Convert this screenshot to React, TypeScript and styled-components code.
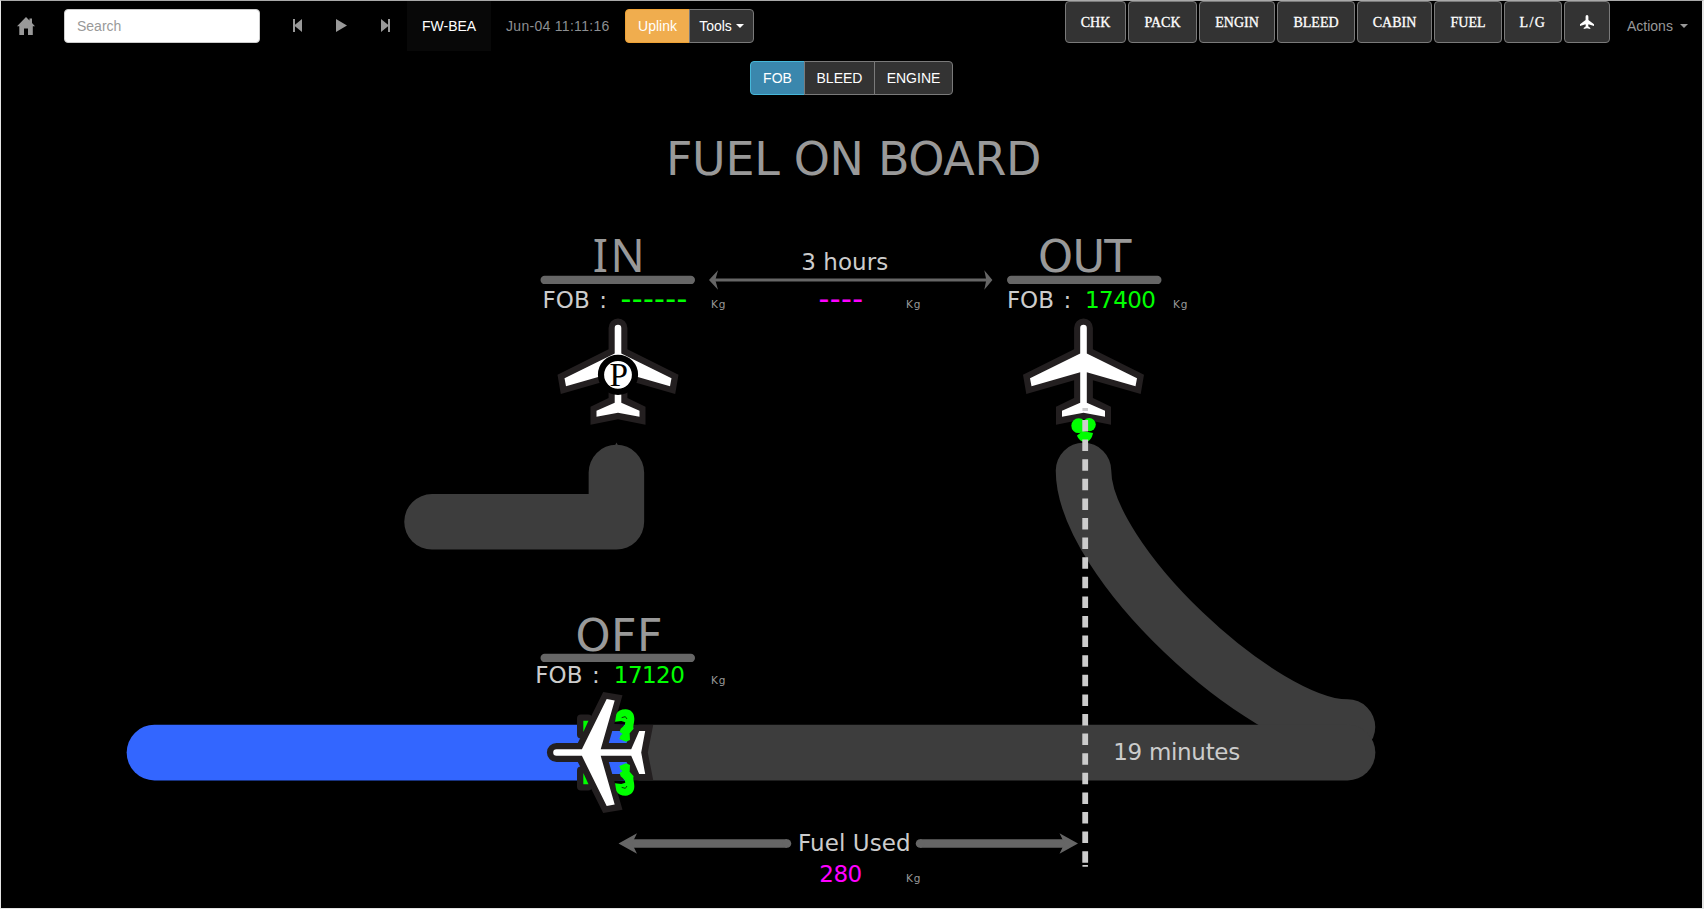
import React from "react";
import styled, { createGlobalStyle, css } from "styled-components";

const GlobalStyle = createGlobalStyle`
  *, *::before, *::after { box-sizing: border-box; }
  html, body { margin: 0; padding: 0; background: #000; overflow: hidden; }
`;

const sans = `"Liberation Sans", Arial, sans-serif`;
const wide = `"DejaVu Sans", Verdana, sans-serif`;

const Page = styled.div`
  width: 1704px;
  height: 909px;
  display: flex;
  flex-direction: column;
  overflow: hidden;
  background: #000;
  border: solid #e4e4e4;
  border-width: 1px 2px 1px 1px;
  border-top-color: #a9a9a9;
  font: 14px/20px ${sans};
`;

const NavBar = styled.header`
  display: flex;
  align-items: flex-start;
  height: 50px;
  flex: none;
`;

const HomeLink = styled.a`
  display: flex;
  width: 63px;
  padding: 16px 0 0 16px;
`;

const SearchInput = styled.input`
  width: 196px;
  height: 34px;
  margin-top: 8px;
  padding: 6px 12px;
  border: 1px solid #ccc;
  border-radius: 4px;
  background: #fff;
  font: 14px/20px ${sans};
  &::placeholder { color: #999; opacity: 1; }
`;

const Playback = styled.div`
  display: flex;
  margin-left: 15px;
  width: 132px;
`;

const PlayButton = styled.button`
  width: 44px;
  height: 50px;
  border: 0;
  background: none;
  display: flex;
  justify-content: center;
  padding: 18px 0 0;
`;

const Aircraft = styled.div`
  width: 84px;
  height: 50px;
  padding: 15px 0 0 15px;
  background: #080808;
  color: #fff;
  white-space: nowrap;
`;

const Timestamp = styled.div`
  width: 134px;
  padding: 15px 0 0 15px;
  color: #8c8f92;
  letter-spacing: 0.3px;
  white-space: nowrap;
`;

const ButtonGroup = styled.div<{ $top?: number }>`
  display: flex;
  margin-top: ${(p) => p.$top ?? 0}px;
`;

const GroupButton = styled.button<{ $width: number; $tone?: "warning" | "info" }>`
  width: ${(p) => p.$width}px;
  height: 34px;
  padding: 0;
  display: flex;
  align-items: center;
  justify-content: center;
  gap: 4px;
  color: #fff;
  background: #333;
  border: 1px solid #7a7a7a;
  font: 14px/20px ${sans};
  & + & { margin-left: -1px; }
  &:first-child { border-radius: 4px 0 0 4px; }
  &:last-child { border-radius: 0 4px 4px 0; }
  ${(p) => p.$tone === "warning" && css`background: #f0ad4e; border-color: #eea236;`}
  ${(p) => p.$tone === "info" && css`background: #3a87ad; border-color: #46b8da;`}
`;

const Caret = styled.span`
  border: 4px solid transparent;
  border-top-color: currentColor;
  border-bottom-width: 0;
`;

const SystemButtons = styled.nav`
  display: flex;
  gap: 2px;
  margin-left: auto;
`;

const SystemButton = styled.button<{ $width: number; $spacing?: number }>`
  width: ${(p) => p.$width}px;
  height: 42px;
  padding: 2px 0 0;
  display: flex;
  align-items: center;
  justify-content: center;
  color: #fff;
  background: #333;
  border: 1px solid #7a7a7a;
  border-radius: 4px;
  font: 14px/14px "Liberation Serif", "Times New Roman", serif;
  letter-spacing: ${(p) => p.$spacing ?? 0}px;
  -webkit-text-stroke: 0.3px #fff;
`;

const PlaneIcon = styled.svg`
  display: block;
  margin-bottom: 3px;
`;

const ActionsLink = styled.a`
  display: flex;
  align-items: center;
  gap: 7px;
  width: 92px;
  padding: 15px 0 0 17px;
  color: #999;
`;

const TabRow = styled.div`
  display: flex;
  justify-content: center;
  height: 49px;
  padding-top: 10px;
  flex: none;
`;

const Diagram = styled.svg`
  display: block;
  width: 1701px;
  height: 807px;
  flex: none;
`;

const Glyph = styled.text`
  font-family: ${wide};
  fill: #ccc;
`;

const grey = "#666";
const taxi = "#3d3d3d";
const shell = "#231f20";
const green = "#0f0";
const magenta = "#f0f";

type LabelProps = { x: number; y: number; length: number; size?: number; fill?: string; family?: string; children: string };

const Label = ({ x, y, length, size = 23, fill = "#ccc", family, children }: LabelProps) => (
  <Glyph x={x} y={y} textLength={length} fontSize={size} style={{ fill, fontFamily: family }}>{children}</Glyph>
);

const Heading = (p: LabelProps) => <Label size={44.5} fill="#999" {...p} />;

const Unit = ({ x, y }: { x: number; y: number }) => (
  <Label x={x} y={y} length={14.4} size={10.5} fill="#999">Kg</Label>
);

const Dashes = ({ x, count, fill }: { x: number; count: number; fill: string }) => (
  <Glyph x={x} y={309} fontSize={30} letterSpacing={0.37} style={{ fill }}>{"-".repeat(count)}</Glyph>
);

const Fob = ({ x, y }: { x: number; y: number }) => (
  <Glyph x={x} y={y} fontSize={23}>FOB <tspan dx="2.2">:</tspan></Glyph>
);

// Nose at the origin, pointing up.
const PlaneShell = () => (
  <path
    fill={shell}
    d="M-9.4 3A9.4 9.6 0 0 1 9.4 3V24.3L60.5 49.7L57.2 69L9.4 55.3V73L27.5 81.7V99.7L0 94.3L-27.5 99.7V81.7L-9.4 73V55.3L-57.2 69L-60.5 49.7L-9.4 24.3Z"
  />
);

const PlaneBody = () => (
  <path
    fill="#fff"
    d="M-3.3 3A3.3 3.3 0 0 1 3.3 3V28.4L53.5 53.2L52 61.2L3.3 47.2V77.7L21.5 85.7V91.7L0 87.7L-21.5 91.7V85.7L-3.3 77.7V47.2L-52 61.2L-53.5 53.2L-3.3 28.4Z"
  />
);

const Engine = () => (
  <g>
    <rect x="577" y="714.5" width="15" height="24" rx="4" fill={shell} />
    <path d="M583.3 720.8H588.5L583.3 732Z" fill={green} />
    <path d="M607 723L624 725L622 731L612 731Z" fill={shell} />
    <g transform="translate(520 600) scale(0.3333)">
      <path
        fill={green}
        d="M285 365L289 343C293 333 303 328 317 328C333 328 343 340 343 356C343 370 338 378 341 386L329 400L330 420L318 425L298 417L302 406L308 402L299 396L302 386L314 376L316 367L304 363Z"
      />
      <path d="M305 353L316 350L321 357" fill="none" stroke="#0a3a0a" strokeWidth="3" />
    </g>
  </g>
);

const systems: [string, number, number?][] = [
  ["CHK", 61], ["PACK", 69], ["ENGIN", 76], ["BLEED", 78], ["CABIN", 75], ["FUEL", 68], ["L/G", 58, 1.4],
];

export default function App() {
  return (
    <Page>
      <GlobalStyle />
      <NavBar>
        <HomeLink>
          <svg width="18" height="18" viewBox="0 0 18 18" fill="#999">
            <path d="M9 0L12.5 3.5V1.5H15V6L18 9.3H15.8V18H11V11.5H7V18H2.3V9.3H0Z" />
          </svg>
        </HomeLink>
        <SearchInput placeholder="Search" />
        <Playback>
          <PlayButton aria-label="Previous">
            <svg width="9" height="13" viewBox="0 0 9 13" fill="#999"><path d="M0 0H2V5.8L9 0V13L2 7.2V13H0Z" /></svg>
          </PlayButton>
          <PlayButton aria-label="Play">
            <svg width="11" height="13" viewBox="0 0 11 13" fill="#999"><path d="M0 0L11 6.5L0 13Z" /></svg>
          </PlayButton>
          <PlayButton aria-label="Next">
            <svg width="9" height="13" viewBox="0 0 9 13" fill="#999"><path d="M9 0H7V5.8L0 0V13L7 7.2V13H9Z" /></svg>
          </PlayButton>
        </Playback>
        <Aircraft>FW-BEA</Aircraft>
        <Timestamp>Jun-04 11:11:16</Timestamp>
        <ButtonGroup $top={8}>
          <GroupButton $width={65} $tone="warning">Uplink</GroupButton>
          <GroupButton $width={65}>Tools<Caret /></GroupButton>
        </ButtonGroup>
        <SystemButtons>
          {systems.map(([name, width, spacing]) => (
            <SystemButton key={name} $width={width} $spacing={spacing}>{name}</SystemButton>
          ))}
          <SystemButton $width={46} aria-label="Flight">
            <PlaneIcon width="14" height="14" viewBox="0 0 14 14" fill="#fff">
              <path d="M7 0C7.900 0 8.400 0.900 8.400 2V5L14 9.200V11L8.400 9.300L8.200 11.300L10.300 13V14L7 13.300L3.700 14V13L5.800 11.300L5.600 9.300L0 11V9.200L5.600 5V2C5.600 0.900 6.100 0 7 0Z" />
            </PlaneIcon>
          </SystemButton>
        </SystemButtons>
        <ActionsLink>Actions<Caret /></ActionsLink>
      </NavBar>
      <TabRow>
        <ButtonGroup>
          <GroupButton $width={55} $tone="info">FOB</GroupButton>
          <GroupButton $width={71}>BLEED</GroupButton>
          <GroupButton $width={79}>ENGINE</GroupButton>
        </ButtonGroup>
      </TabRow>
      <Diagram viewBox="1 100 1701 807">
        <Label x={666} y={175} length={375.5} size={46} fill="#999">FUEL ON BOARD</Label>

        {/* Taxi and runway tracks */}
        <path d="M432 521.8H616.4V472.5" fill="none" stroke={taxi} strokeWidth="55.5" strokeLinecap="round" strokeLinejoin="round" />
        <path d="M615 445.5L616.5 442.5L618 445.5Z" fill={taxi} />
        <path d="M1083.5 470.5C1083.5 560 1262 727 1347.5 727" fill="none" stroke={taxi} strokeWidth="55.5" strokeLinecap="round" />
        <path d="M640 752.6H1347.5" stroke={taxi} strokeWidth="55.7" strokeLinecap="round" />
        <path d="M154.5 752.6H600" stroke="#36f" strokeWidth="55.7" strokeLinecap="round" />
        <rect x="600" y="724.8" width="28" height="55.6" fill="#36f" />
        <rect x="628" y="724.8" width="12" height="55.6" fill={shell} />

        {/* IN */}
        <Heading x={592.8} y={272.2} length={52} size={45} family={`"Noto Sans", sans-serif`}>IN</Heading>
        <rect x="540.5" y="275.8" width="154.5" height="8.3" rx="4.15" fill={grey} />
        <Fob x={542.6} y={307.5} />
        <Dashes x={620.5} count={6} fill={green} />
        <Unit x={711} y={307.7} />
        <g transform="translate(618 325)"><PlaneShell /><PlaneBody /></g>
        <circle cx="618" cy="374.8" r="17" fill="#fff" stroke="#000" strokeWidth="6.2" />
        <text x="609.5" y="386" fontSize="34" fontFamily={`"Liberation Serif", serif`} textLength="18.5" lengthAdjust="spacingAndGlyphs">P</text>

        {/* Time between IN and OUT */}
        <path d="M714 280H987" stroke={grey} strokeWidth="2.8" />
        <path d="M709 280L718 270.3L715.3 280L718 289.7ZM992.4 280L984.3 270.3L986.3 280L984.3 289.7Z" fill={grey} />
        <Label x={801.2} y={269.6} length={87}>3 hours</Label>
        <Dashes x={818.6} count={4} fill={magenta} />
        <Unit x={906} y={307.7} />

        {/* OUT */}
        <Heading x={1038} y={272} length={93.5}>OUT</Heading>
        <rect x="1007" y="275.8" width="154.5" height="8.3" rx="4.15" fill={grey} />
        <Fob x={1006.9} y={307.5} />
        <Label x={1085} y={307.5} length={71} fill={green}>17400</Label>
        <Unit x={1173} y={307.7} />
        <g transform="translate(1083.5 325)"><PlaneShell /><PlaneBody /></g>
        <g fill={green}>
          <circle cx="1078.7" cy="425.7" r="7.4" />
          <circle cx="1089.2" cy="424.6" r="6.6" />
          <path d="M1077 435.5L1083 431L1093 433C1092 439 1088.5 442 1085 442C1081.5 442 1078.5 439.5 1077 435.5Z" />
        </g>
        <path d="M1085.2 420V864" stroke="#ccc" strokeWidth="5.8" strokeDasharray="11.5 8.1" />
        <path d="M1085.2 408V411M1085.2 865V866.8" stroke="#ccc" strokeWidth="5.5" />

        {/* OFF */}
        <Heading x={575.5} y={650.8} length={87}>OFF</Heading>
        <rect x="540.5" y="653.8" width="154.5" height="8.3" rx="4.15" fill={grey} />
        <Fob x={535.3} y={683.3} />
        <Label x={613.8} y={683.3} length={71} fill={green}>17120</Label>
        <Unit x={711} y={683.7} />
        <g transform="translate(553.5 752.5) rotate(-90)"><PlaneShell /></g>
        <Engine />
        <g transform="translate(0 1505) scale(1 -1)"><Engine /></g>
        <g transform="translate(553.5 752.5) rotate(-90)"><PlaneBody /></g>
        <Label x={1113.2} y={759.5} length={127}>19 minutes</Label>

        {/* Fuel used */}
        <path d="M629 843.5H787M920 843.5H1068" stroke={grey} strokeWidth="8.5" />
        <circle cx="787" cy="843.5" r="4.25" fill={grey} />
        <circle cx="920" cy="843.5" r="4.25" fill={grey} />
        <path d="M618.5 843.5L637 833.2L632 843.5L637 853.8ZM1078 843.5L1059.5 833.2L1064.5 843.5L1059.5 853.8Z" fill={grey} />
        <Label x={798} y={850.8} length={112.5}>Fuel Used</Label>
        <Label x={819.2} y={881.8} length={43} fill={magenta}>280</Label>
        <Unit x={906} y={882} />
      </Diagram>
    </Page>
  );
}
